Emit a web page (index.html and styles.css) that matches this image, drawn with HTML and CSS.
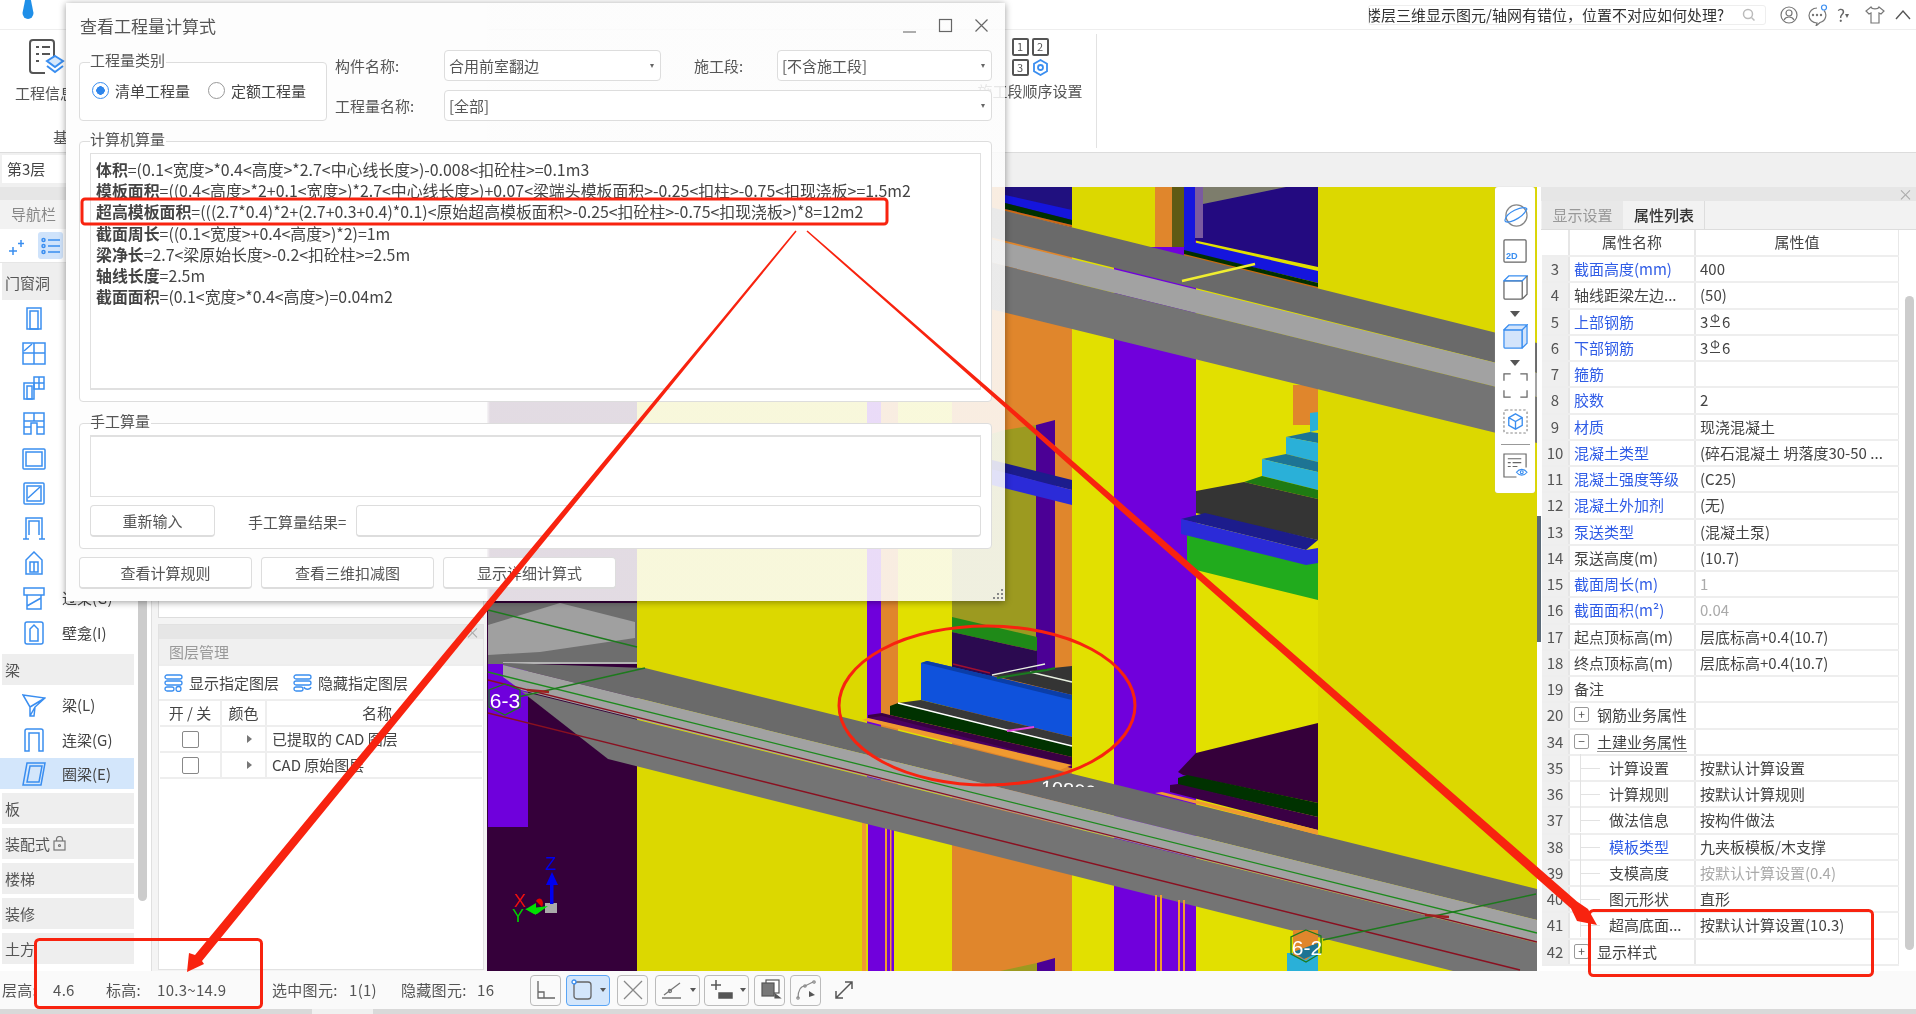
FILE: index.html
```html
<!DOCTYPE html>
<html lang="zh-CN">
<head>
<meta charset="utf-8">
<title>查看工程量计算式</title>
<link rel="stylesheet" href="styles.css">
</head>
<body>
<div class="app">
  <header class="ribbon">
    <div class="titlerow">
      <svg class="drop" width="14" height="20" viewBox="0 0 14 20"><path d="M4.500 -2h5l3 15a5.500 6 0 0 1-11 0z" fill="#1f8fe8"/></svg>
      <div class="search"><div class="search-text"><span>楼层三维显示图元/轴网有错位，位置不对应如何处理?</span></div>
        <svg width="14" height="14" viewBox="0 0 14 14" fill="none" stroke="#bbb" stroke-width="1.5"><circle cx="6" cy="6" r="4.5"/><path d="M9.5 9.5l3 3"/></svg>
      </div>
      <div class="winicons">
        <svg width="20" height="20" viewBox="0 0 20 20" fill="none" stroke="#777" stroke-width="1.2"><circle cx="10" cy="10" r="8"/><circle cx="10" cy="8" r="3"/><path d="M5 15c2-4 8-4 10 0"/></svg>
        <svg width="22" height="22" viewBox="0 0 22 22" fill="none" stroke="#777" stroke-width="1.2"><path d="M10 4a8 7.5 0 1 0 0 15l-1 3 4-3.500a8 7.500 0 0 0 4-12"/><circle cx="6" cy="11" r=".6"/><circle cx="10" cy="11" r=".6"/><circle cx="14" cy="11" r=".6"/><circle cx="17" cy="3.500" r="2.500" stroke="#3a8ef0"/></svg>
        <span class="help">?<i>▾</i></span>
        <svg width="22" height="20" viewBox="0 0 22 20" fill="none" stroke="#777" stroke-width="1.2"><path d="M7 2L2 6l3 3 2-1v10h8V8l2 1 3-3-5-4c-1 2.500-7 2.500-8 0z"/></svg>
        <svg width="18" height="14" viewBox="0 0 18 14" fill="none" stroke="#555" stroke-width="1.4"><path d="M2 11l7-8 7 8"/></svg>
      </div>
    </div>
    <div class="tools">
      <div class="tool tool-info">
        <svg width="38" height="40" viewBox="0 0 38 40" fill="none" stroke="#555" stroke-width="2"><path d="M27 26V7a3 3 0 0 0-3-3H6a3 3 0 0 0-3 3v27a3 3 0 0 0 3 3h12"/><path d="M9 11h3M15 11h8M9 18h3M15 18h8M9 25h3" stroke-width="1.800"/><path d="M28 20l8 5-8 6-8-6z" fill="#d7e8fb" stroke="#3a8ef0"/><path d="M20 30l8 6 8-6" stroke="#3a8ef0"/></svg>
        <span>工程信息</span>
      </div>
      <div class="group-label">基</div>
      <div class="tool tool-order">
        <div class="order-grid"><b>1</b><b>2</b><b>3</b>
          <svg width="17" height="17" viewBox="0 0 17 17" fill="none" stroke="#3a8ef0" stroke-width="1.800"><path d="M8.500 1l6.500 3.700v7.600L8.500 16 2 12.300V4.700z"/><circle cx="8.500" cy="8.500" r="2.500"/></svg>
        </div>
        <span>施工段顺序设置</span>
      </div>
      <div class="tool-sep"></div>
    </div>
  </header>

  <div class="floorbar"><div class="floor">第3层</div></div>

  <main class="main">
    <aside class="sidebar">
      <div class="side-top"></div>
      <div class="side-nav">导航栏</div>
      <div class="side-icons">
        <svg width="18" height="20" viewBox="0 0 18 20" fill="none" stroke="#3a8ef0" stroke-width="1.500"><path d="M5 11v8M1 15h8M13 4v7M10 7.500h6"/></svg>
        <div class="list-on"><svg width="20" height="18" viewBox="0 0 20 18" fill="none" stroke="#3a8ef0" stroke-width="1.500"><circle cx="2.500" cy="3" r="1.500"/><circle cx="2.500" cy="9" r="1.500"/><circle cx="2.500" cy="15" r="1.500"/><path d="M7 3h12M7 9h12M7 15h12"/></svg></div>
      </div>
      <div class="side-head side-head-first">门窗洞</div>
      <div class="side-list">
        <div class="item"><svg class="ic" viewBox="0 0 24 24"><rect x="5" y="2" width="14" height="21"/><rect x="8" y="5" width="8" height="18"/></svg></div>
        <div class="item"><svg class="ic" viewBox="0 0 24 24"><rect x="1" y="2" width="22" height="21"/><path d="M12 2v21M1 12h22M2 10L10 3"/></svg></div>
        <div class="item"><svg class="ic" viewBox="0 0 24 24"><rect x="2" y="7" width="10" height="16"/><rect x="5" y="10" width="5" height="13"/><rect x="12" y="1" width="10" height="12"/><path d="M17 1v12M12 7h10"/></svg></div>
        <div class="item"><svg class="ic" viewBox="0 0 24 24"><path d="M2 23V2h20v21h-7V12H9v11zM2 10h20M12 2v8M2 16h7M15 16h7"/></svg></div>
        <div class="item"><svg class="ic" viewBox="0 0 24 24"><rect x="1" y="3" width="22" height="20" rx="1"/><rect x="4" y="6" width="16" height="14"/></svg></div>
        <div class="item"><svg class="ic" viewBox="0 0 24 24"><rect x="2" y="2" width="20" height="21" rx="1"/><rect x="5" y="5" width="14" height="15"/><path d="M6 17L18 6"/></svg></div>
        <div class="item"><svg class="ic" viewBox="0 0 24 24"><path d="M4 23V2h16v21M1 23h6M17 23h6M7 19V5h10v14"/></svg></div>
        <div class="item"><svg class="ic" viewBox="0 0 24 24"><path d="M12 1l8 8v14H4V9zM8 11h8v10H8zM12 11v10"/></svg></div>
        <div class="item item-over"><svg class="ic" viewBox="0 0 24 24"><path d="M2 2h20v7H2zM5 9v14h14V9M5 20l14-8"/></svg><span>过梁(G)</span></div>
        <div class="item"><svg class="ic" viewBox="0 0 24 24"><rect x="3" y="1" width="18" height="22" rx="2"/><path d="M8 20V8l4-4 4 4v12z"/></svg><span>壁龛(I)</span></div>
      </div>
      <div class="side-head">梁</div>
      <div class="item"><svg class="ic" viewBox="0 0 24 24"><path d="M1 2l22 3-10 9-1 9h-4v-9zM8 14L23 5M13 14l-5 9"/></svg><span>梁(L)</span></div>
      <div class="item"><svg class="ic" viewBox="0 0 24 24"><path d="M3 23V3a2 2 0 0 1 2-2h14a2 2 0 0 1 2 2v20h-4V5H7v18z"/></svg><span>连梁(G)</span></div>
      <div class="item item-on"><svg class="ic" viewBox="0 0 24 24"><path d="M5 1h18l-4 22H1zM8 4h12l-3 16H5z"/></svg><span>圈梁(E)</span></div>
      <div class="side-head">板</div>
      <div class="side-head">装配式 <svg width="13" height="15" viewBox="0 0 13 15" fill="none" stroke="#777" stroke-width="1.200"><rect x="1" y="5" width="11" height="9"/><path d="M3.500 5V3a3 2.500 0 0 1 6 0v2"/><circle cx="6.500" cy="9.500" r="1"/></svg></div>
      <div class="side-head">楼梯</div>
      <div class="side-head">装修</div>
      <div class="side-head">土方</div>
      <div class="side-scroll"></div>
    </aside>

    <section class="layers">
      <div class="layers-upper"></div>
      <div class="layers-panel">
        <div class="panel-bar"><span>×</span></div>
        <div class="panel-title">图层管理</div>
        <div class="layer-tools">
          <svg width="19" height="18" viewBox="0 0 19 18" fill="none" stroke="#3a8ef0" stroke-width="1.300"><rect x="1" y="1" width="17" height="4" rx="2"/><rect x="1" y="7" width="17" height="4" rx="2"/><rect x="1" y="13" width="9" height="4" rx="2"/><circle cx="14.500" cy="15" r="2.500" fill="#fff"/></svg><span>显示指定图层</span>
          <svg class="gap" width="19" height="18" viewBox="0 0 19 18" fill="none" stroke="#3a8ef0" stroke-width="1.300"><rect x="1" y="1" width="17" height="4" rx="2"/><rect x="1" y="7" width="17" height="4" rx="2"/><rect x="1" y="13" width="9" height="4" rx="2"/><path d="M11 13c1 3 6 3 7 0"/></svg><span>隐藏指定图层</span>
        </div>
        <div class="lrow lhead"><div class="lc1">开 / 关</div><div class="lc2">颜色</div><div class="lc3 center">名称</div></div>
        <div class="lrow"><div class="lc1"><i class="check"></i></div><div class="lc2"><i class="tri"></i></div><div class="lc3">已提取的 CAD 图层</div></div>
        <div class="lrow"><div class="lc1"><i class="check"></i></div><div class="lc2"><i class="tri"></i></div><div class="lc3">CAD 原始图层</div></div>
      </div>
    </section>

    <section class="canvas">
      <svg class="scene" viewBox="487 187 1050 784" width="1050" height="784">
        <rect x="487" y="187" width="1050" height="784" fill="#dcd800"/>
        <rect x="487" y="187" width="150" height="784" fill="#35003a"/>
        <rect x="488" y="655" width="40" height="172" fill="#6f00dc"/><path d="M488 827l40-8v-10h-40z" fill="#6f00dc"/>
        <rect x="867" y="187" width="14" height="784" fill="#6f00dc"/>
        <rect x="881" y="187" width="17" height="784" fill="#e0862c"/>
        <rect x="898" y="187" width="54" height="784" fill="#e2e000"/>
        <rect x="952" y="187" width="120" height="784" fill="#e0862c"/>
        <path d="M952 445l53-15 31-5V640h-84z" fill="#9c9a20"/>
        <path d="M1036 425l19-5V670h-19z" fill="#4b0095"/>
        <path d="M952 450l120 30v10l-120-30z" fill="#1c1c8c"/><path d="M952 459l120 31v15l-120-30z" fill="#2b2bd8"/>
        <path d="M952 617l85 20v14l-85-19z" fill="#1f8a18"/>
        <path d="M952 632l85 19v19l-47 7-38-9z" fill="#2b0a50"/>
        <rect x="1072" y="187" width="42" height="784" fill="#e2e000"/>
        <rect x="1114" y="187" width="82" height="784" fill="#7000dc"/>
        <rect x="1196" y="187" width="122" height="784" fill="#e2e000"/>
        <rect x="1293" y="385" width="25" height="40" fill="#e0862c"/>
        <rect x="1318" y="187" width="219" height="784" fill="#dcd800"/>
        <!-- below-beam stripes on the left column group -->
        <rect x="862" y="800" width="36" height="171" fill="#dcd800"/>
        <rect x="862" y="800" width="4" height="171" fill="#f09a30"/>
        <rect x="868" y="800" width="26" height="171" fill="#7000dc"/>
        <rect x="885" y="800" width="2" height="171" fill="#f09a30"/><rect x="890" y="800" width="1.500" height="171" fill="#f09a30"/>
        <rect x="894" y="800" width="4" height="171" fill="#e2e000"/>
        <!-- upper openings -->
        <path d="M1005 187h67v40l-67-17z" fill="#20107f"/><path d="M1005 195l67 15v10l-67-17z" fill="#1515dd"/><path d="M1005 203l67 17v5l-67-16z" fill="#003000"/><path d="M1005 209l67 16v2l-67-16z" fill="#d06a10"/>
        <rect x="1072" y="187" width="83" height="60" fill="#dcd800"/>
        <rect x="1155" y="187" width="17" height="60" fill="#e0862c"/>
        <rect x="1172" y="187" width="12" height="60" fill="#5e5a14"/>
        <path d="M1184 187h134v80l-134-29z" fill="#230a80"/>
        <path d="M1184 187h11v60h-11z" fill="#1515dd"/>
        <path d="M1195 187h8v51h-8z" fill="#7a5aa0"/>
        <path d="M1203 187h83l-83 17z" fill="#7d7d6c"/>
        <path d="M1184 240l134 31v12l-134-32z" fill="#1515dd"/><path d="M1184 250l134 33v5l-134-33z" fill="#003000"/><path d="M1184 254l134 33v2l-134-33z" fill="#c86a10"/>
        <!-- upper beam -->
        <path d="M640 120L1537 343V373L640 150z" fill="#6a6a6a"/>
        <path d="M640 153L1537 373V397L640 176z" fill="#a2a2a2"/>
        <path d="M640 176L1537 397V443L640 223z" fill="#747474"/>
        <path d="M1182 281L1255 264" stroke="#f0ee30" stroke-width="2.500" fill="none"/>
        <!-- stairs -->
        <path d="M1310 413l8-1v18l-8 2z" fill="#2ab0d8"/>
        <path d="M1286 437l24-5 8 1v10z" fill="#1d7494"/><path d="M1286 437l32 6v19l-32-8z" fill="#2ab0d8"/>
        <path d="M1262 459l24-5 32 8v10z" fill="#1d7494"/><path d="M1262 459l56 13v18l-56-14z" fill="#2ab0d8"/>
        <path d="M1244 482l18-6 56 14v9z" fill="#1f7a12"/>
        <path d="M1196 491l48-9 74 17v41l-122-27z" fill="#343434"/>
        <path d="M1181 519l24-6 113 27-12 10z" fill="#1c1c8c"/>
        <path d="M1187 534l119 30 12-2v38l-122-30h-9z" fill="#21ab1d"/>
        <path d="M1181 519l125 31 12-2v15l-12 2-125-31z" fill="#2b2bd8"/>
        <!-- centre recess -->
        <path d="M990 675l63-7 19-2v29z" fill="#343434"/>
        <path d="M953 664l37 9" stroke="#a01030" stroke-width="1.500"/>
        <path d="M921 663l6-2 145 34v42l-151-37z" fill="#0f52dc"/><path d="M921 663l6-2 145 34v5z" fill="#0b3ea8"/>
        <path d="M898 703l23-3 151 37v9z" fill="#383838"/>
        <path d="M890 706l8-3 174 43v11l-182-42z" fill="#003200"/>
        <path d="M868 715l14-2 8 2 182 42v11L868 718z" fill="#3a0044"/>
        <path d="M868 718l204 50v-3L882 716z" fill="#4a0060"/>
        <path d="M898 703l174 43" stroke="#fff" stroke-width="1.500"/>
        <path d="M992 675l53-11M1030 672l42 10" stroke="#e8f0e0" stroke-width="1.300"/><path d="M997 678l50-8 8-2" stroke="#1a7a20" stroke-width="2"/>
        <path d="M1007 731l27-4" stroke="#e040e0" stroke-width="2"/>
        <path d="M1196 753l122-30v80l-135-28-5-3z" fill="#35003a"/>
        <path d="M1178 778l9-3 131 28v14l-140-32z" fill="#003200"/>
        <path d="M1170 785l8-1 140 33v13l-148-38z" fill="#3a0044"/>
        <!-- lower beam and left block -->
        <rect x="488" y="603" width="149" height="61" fill="#6e6e6e"/>
        <path d="M560 603l75 19v16l-95 14-52 3v-30z" fill="#a0a0a0"/>
        <path d="M488 610l149 37" stroke="#1d7a1d" stroke-width="1.500"/>
        <path d="M503 663h134" stroke="#ccc" stroke-width="1.500"/>
        <path d="M503 663l142 5 892 221v31L503 665z" fill="#6a6a6a"/>
        <path d="M503 665l1034 255v23L521 690l-18-13z" fill="#a2a2a2"/>
        <path d="M521 691l1016 252v28h-84L608 759z" fill="#747474"/>
        <path d="M862 720l6-2 204 47-12 5z" fill="#f09a30"/><path d="M1155 793l7-1 156 38v5z" fill="#f09a30"/>
        <path d="M488 672l1049 261" stroke="#1d8a1d" stroke-width="1.300"/>
        <path d="M488 680l1049 262M488 713l1032 257" stroke="#8a1020" stroke-width="1.300"/>
        <path d="M518 697l127-29M1323 940l213-46" stroke="#1d7a1d" stroke-width="1.300"/>
        <path d="M527 690l22 2M1425 915l24 2" stroke="#a02020" stroke-width="2.500"/>
        <rect x="1155" y="895" width="2" height="76" fill="#f09a30"/><rect x="1160" y="895" width="2" height="76" fill="#f09a30"/><rect x="1178" y="900" width="2" height="71" fill="#f09a30"/><rect x="1183" y="900" width="2" height="71" fill="#f09a30"/>
        <path d="M1000 971l37-8h18v8z" fill="#9c9a20"/><path d="M1037 963l18-5v13h-18z" fill="#4b0095"/>
        <rect x="1287" y="953" width="31" height="18" fill="#2ab0d8"/>
        <path d="M1293 930h25v20l-12 10-13-5z" fill="#e0862c"/><path d="M1293 952l25-9v10l-14 6z" fill="#1d7494"/>
        <path d="M1306 930l15 6v17l-15 9-15-8v-17z" fill="none" stroke="#1d7a1d" stroke-width="1.300"/>
        <path d="M505 684l15 6v17l-15 8-16-8v-17z" fill="none" stroke="#1d7a1d" stroke-width="1.300"/>
        <text class="s-label" x="1307" y="955" text-anchor="middle">6-2</text>
        <text class="s-label" x="505" y="708" text-anchor="middle">6-3</text>
        <clipPath id="dimclip"><rect x="1030" y="770" width="80" height="17"/></clipPath>
        <g clip-path="url(#dimclip)"><text class="s-dim" x="1040" y="794" transform="rotate(6 1040 794)">10800</text></g>
        <!-- axis -->
        <rect x="545" y="903" width="12" height="10" fill="#aaa"/>
        <rect x="550" y="880" width="3.500" height="24" fill="#0000f0"/><path d="M552 872l6 13h-12z" fill="#0000f0"/>
        <path d="M548 906l-23 3 9 5 3 0z" fill="#00e000"/><path d="M526 909l10-6v12z" fill="#00e000"/>
        <path d="M536 901c4-6 9 0 6 6z" fill="#e00000"/>
        <text class="s-axis az" x="545" y="870">Z</text><text class="s-axis ax" x="514" y="907">X</text><text class="s-axis ay" x="512" y="922">Y</text>
      </svg>
      <div class="viewbar">
        <svg class="v" viewBox="0 0 26 26" fill="none" stroke="#888" stroke-width="1.300"><circle cx="14" cy="13" r="11"/><path d="M2 18C3 10 20 2 25 6" stroke="#3a8ef0"/><path d="M2 18c0 5 18-1 23-12" stroke="#3a8ef0"/></svg>
        <svg class="v" viewBox="0 0 26 26" fill="none" stroke="#666" stroke-width="1.300"><rect x="1" y="1" width="23" height="23" rx="1"/><text class="v2dt" x="3" y="21">2D</text></svg>
        <svg class="v" viewBox="0 0 26 26" fill="none" stroke="#666" stroke-width="1.300"><rect x="1" y="6" width="19" height="19" rx="1"/><path d="M1 6l5-5h19l-5 5z" stroke="#3a8ef0"/><path d="M25 1v19l-5 5"/></svg>
        <i class="vtri"></i>
        <svg class="v" viewBox="0 0 26 26" fill="#d3e4fb" stroke="#3a8ef0" stroke-width="1.300"><rect x="1" y="6" width="19" height="19" rx="1"/><path d="M1 6l5-5h19l-5 5zM25 1v19l-5 5V6z"/></svg>
        <i class="vtri"></i>
        <svg class="v" viewBox="0 0 26 26" fill="none" stroke="#666" stroke-width="1.300"><path d="M1 8V1h7M18 1h7v7M25 18v7h-7M8 25H1v-7"/></svg>
        <svg class="v" viewBox="0 0 26 26" fill="none" stroke="#888" stroke-width="1.200"><rect x="1" y="1" width="24" height="24" rx="2" stroke-dasharray="2.500 2"/><path d="M13 5l7 4v8l-7 4-7-4V9zM6 9l7 4 7-4M13 13v8" stroke="#3a8ef0" stroke-width="1.400"/></svg>
        <i class="vline"></i>
        <svg class="v" viewBox="0 0 26 26" fill="none" stroke="#666" stroke-width="1.200"><path d="M14 25H1V1h23v14"/><path d="M5 6h14M5 10h3M10 10h9M5 14h3M10 14h5"/><path d="M14 20c3-4 8-4 11 0-3 4-8 4-11 0z" stroke="#3a8ef0"/><circle cx="19.500" cy="20" r="1.500" stroke="#3a8ef0"/></svg>
      </div>
    </section>

    <div class="splitter"><i></i></div>

    <section class="props">
      <div class="panel-bar"><span>×</span></div>
      <div class="tabs"><div class="tab">显示设置</div><div class="tab tab-on">属性列表</div></div>
      <div class="ptable">
        <div class="prow phead"><div class="pn"></div><div class="pk pc">属性名称</div><div class="pv pc">属性值</div></div>
        <div class="prow"><div class="pn">3</div><div class="pk link">截面高度(mm)</div><div class="pv">400</div></div>
        <div class="prow"><div class="pn">4</div><div class="pk">轴线距梁左边...</div><div class="pv">(50)</div></div>
        <div class="prow"><div class="pn">5</div><div class="pk link">上部钢筋</div><div class="pv">3<sup class="bar">Φ</sup>6</div></div>
        <div class="prow"><div class="pn">6</div><div class="pk link">下部钢筋</div><div class="pv">3<sup class="bar">Φ</sup>6</div></div>
        <div class="prow"><div class="pn">7</div><div class="pk link">箍筋</div><div class="pv"></div></div>
        <div class="prow"><div class="pn">8</div><div class="pk link">胶数</div><div class="pv">2</div></div>
        <div class="prow"><div class="pn">9</div><div class="pk link">材质</div><div class="pv">现浇混凝土</div></div>
        <div class="prow"><div class="pn">10</div><div class="pk link">混凝土类型</div><div class="pv">(碎石混凝土 坍落度30-50 ...</div></div>
        <div class="prow"><div class="pn">11</div><div class="pk link">混凝土强度等级</div><div class="pv">(C25)</div></div>
        <div class="prow"><div class="pn">12</div><div class="pk link">混凝土外加剂</div><div class="pv">(无)</div></div>
        <div class="prow"><div class="pn">13</div><div class="pk link">泵送类型</div><div class="pv">(混凝土泵)</div></div>
        <div class="prow"><div class="pn">14</div><div class="pk">泵送高度(m)</div><div class="pv">(10.7)</div></div>
        <div class="prow"><div class="pn">15</div><div class="pk link">截面周长(m)</div><div class="pv dim">1</div></div>
        <div class="prow"><div class="pn">16</div><div class="pk link">截面面积(m²)</div><div class="pv dim">0.04</div></div>
        <div class="prow"><div class="pn">17</div><div class="pk">起点顶标高(m)</div><div class="pv">层底标高+0.4(10.7)</div></div>
        <div class="prow"><div class="pn">18</div><div class="pk">终点顶标高(m)</div><div class="pv">层底标高+0.4(10.7)</div></div>
        <div class="prow"><div class="pn">19</div><div class="pk">备注</div><div class="pv"></div></div>
        <div class="prow"><div class="pn">20</div><div class="pk"><i class="box">+</i>钢筋业务属性</div><div class="pv"></div></div>
        <div class="prow"><div class="pn">34</div><div class="pk"><i class="box">−</i><u>土建业务属性</u></div><div class="pv"></div></div>
        <div class="prow"><div class="pn">35</div><div class="pk"><i class="tree"></i>计算设置</div><div class="pv">按默认计算设置</div></div>
        <div class="prow"><div class="pn">36</div><div class="pk"><i class="tree"></i>计算规则</div><div class="pv">按默认计算规则</div></div>
        <div class="prow"><div class="pn">37</div><div class="pk"><i class="tree"></i>做法信息</div><div class="pv">按构件做法</div></div>
        <div class="prow"><div class="pn">38</div><div class="pk link"><i class="tree"></i>模板类型</div><div class="pv">九夹板模板/木支撑</div></div>
        <div class="prow"><div class="pn">39</div><div class="pk"><i class="tree"></i>支模高度</div><div class="pv dim">按默认计算设置(0.4)</div></div>
        <div class="prow"><div class="pn">40</div><div class="pk"><i class="tree"></i>图元形状</div><div class="pv">直形</div></div>
        <div class="prow"><div class="pn">41</div><div class="pk"><i class="tree"></i>超高底面...</div><div class="pv">按默认计算设置(10.3)</div></div>
        <div class="prow"><div class="pn">42</div><div class="pk"><i class="box">+</i>显示样式</div><div class="pv"></div></div>
      </div>
      <div class="props-scroll"></div>
    </section>
  </main>

  <footer class="status">
    <div class="status-info">
      <span>层高:</span><span>4.6</span><span>标高:</span><span>10.3~14.9</span><span>选中图元:</span><span>1(1)</span><span>隐藏图元:</span><span>16</span>
    </div>
    <div class="sbtn"><svg width="24" height="24" viewBox="0 0 24 24" fill="none" stroke="#666" stroke-width="1.300"><path d="M4 3v17h17M4 14h6v6"/></svg></div>
    <div class="sbtn sbtn-wide sbtn-on"><svg width="24" height="24" viewBox="0 0 24 24" fill="none" stroke="#666" stroke-width="1.300"><rect x="4" y="4" width="17" height="17" rx="3"/><circle cx="4" cy="4" r="2" stroke="#3a8ef0" fill="#fff"/></svg><i class="stri"></i></div>
    <div class="sbtn"><svg width="24" height="24" viewBox="0 0 24 24" fill="none" stroke="#888" stroke-width="1.300"><path d="M3 3l18 18M21 3L3 21"/></svg></div>
    <div class="sbtn sbtn-wide sbtn-b"><svg width="24" height="24" viewBox="0 0 24 24" fill="none" stroke="#777" stroke-width="1.300"><path d="M2 20h19M4 17L20 5"/><circle cx="10" cy="13" r="1.500"/></svg><i class="stri"></i></div>
    <div class="sbtn sbtn-wide sbtn-c"><svg width="26" height="24" viewBox="0 0 26 24" fill="none" stroke="#555" stroke-width="1.500"><path d="M8 2v10M3 7h10"/><rect x="11" y="15" width="13" height="5" fill="#555"/></svg><i class="stri"></i></div>
    <div class="sbtn sbtn-d"><svg width="24" height="24" viewBox="0 0 24 24" fill="#777" stroke="#555" stroke-width="1.200"><rect x="8" y="2" width="13" height="13" fill="#fff"/><rect x="4" y="5" width="12" height="13"/><path d="M17 16l5 4h-5z" fill="#555"/></svg></div>
    <div class="sbtn"><svg width="24" height="24" viewBox="0 0 24 24" fill="none" stroke="#888" stroke-width="1.200"><path d="M4 20c0-8 3-12 7-12l8-4"/><circle cx="4" cy="20" r="1.200"/><circle cx="11" cy="8" r="1.200"/><circle cx="20" cy="4" r="1.200"/><path d="M15 13l6 4-6 2z" fill="#555" stroke="none"/></svg></div>
    <div class="sexpand"><svg width="22" height="22" viewBox="0 0 22 22" fill="none" stroke="#555" stroke-width="1.500"><path d="M3 19L19 3M12 3h7v7M3 12v7h7"/></svg></div>
  </footer>
  <div class="bottomstrip"><i></i></div>

  <!-- floating dialog window -->
  <section class="dialog">
    <div class="d-title">
      <span>查看工程量计算式</span>
      <div class="d-win">
        <svg width="15" height="15" viewBox="0 0 15 15" fill="none" stroke="#777" stroke-width="1.200"><path d="M1 14h13"/></svg>
        <svg width="15" height="15" viewBox="0 0 15 15" fill="none" stroke="#666" stroke-width="1.200"><rect x="1.500" y="1.500" width="12" height="12"/></svg>
        <svg width="15" height="15" viewBox="0 0 15 15" fill="none" stroke="#666" stroke-width="1.200"><path d="M1.500 1.500l12 12M13.500 1.500l-12 12"/></svg>
      </div>
    </div>
    <div class="d-top">
      <div class="group g-type">
        <span class="legend">工程量类别</span>
        <div class="radios">
          <i class="radio radio-on"></i><span>清单工程量</span>
          <i class="radio radio-2"></i><span>定额工程量</span>
        </div>
      </div>
      <div class="form">
        <span>构件名称:</span><div class="select">合用前室翻边<i class="caret"></i></div>
        <span class="form-mid">施工段:</span><div class="select">[不含施工段]<i class="caret"></i></div>
        <span>工程量名称:</span><div class="select select-full">[全部]<i class="caret"></i></div>
      </div>
    </div>
    <div class="group g-calc">
      <span class="legend">计算机算量</span>
      <div class="calcbox">
        <div><b>体积</b>=(0.1&lt;宽度&gt;*0.4&lt;高度&gt;*2.7&lt;中心线长度&gt;)-0.008&lt;扣砼柱&gt;=0.1m3</div>
        <div><b>模板面积</b>=((0.4&lt;高度&gt;*2+0.1&lt;宽度&gt;)*2.7&lt;中心线长度&gt;)+0.07&lt;梁端头模板面积&gt;-0.25&lt;扣柱&gt;-0.75&lt;扣现浇板&gt;=1.5m2</div>
        <div><b>超高模板面积</b>=(((2.7*0.4)*2+(2.7+0.3+0.4)*0.1)&lt;原始超高模板面积&gt;-0.25&lt;扣砼柱&gt;-0.75&lt;扣现浇板&gt;)*8=12m2</div>
        <div><b>截面周长</b>=((0.1&lt;宽度&gt;+0.4&lt;高度&gt;)*2)=1m</div>
        <div><b>梁净长</b>=2.7&lt;梁原始长度&gt;-0.2&lt;扣砼柱&gt;=2.5m</div>
        <div><b>轴线长度</b>=2.5m</div>
        <div><b>截面面积</b>=(0.1&lt;宽度&gt;*0.4&lt;高度&gt;)=0.04m2</div>
      </div>
    </div>
    <div class="group g-manual">
      <span class="legend">手工算量</span>
      <div class="manualbox"></div>
      <div class="manual-row">
        <div class="btn btn-re">重新输入</div>
        <span class="m-label">手工算量结果=</span>
        <div class="m-input"></div>
      </div>
    </div>
    <div class="d-btns">
      <div class="btn btn-b">查看计算规则</div>
      <div class="btn btn-b">查看三维扣减图</div>
      <div class="btn btn-b">显示详细计算式</div>
    </div>
    <svg class="grip" width="10" height="10" viewBox="0 0 10 10" fill="#888"><rect x="8" y="0" width="2" height="2"/><rect x="4" y="4" width="2" height="2"/><rect x="8" y="4" width="2" height="2"/><rect x="0" y="8" width="2" height="2"/><rect x="4" y="8" width="2" height="2"/><rect x="8" y="8" width="2" height="2"/></svg>
  </section>

  <!-- hand-drawn red annotations lying over the screenshot -->
  <svg class="annot" viewBox="0 0 1916 1014" width="1916" height="1014">
    <rect x="82" y="199" width="805" height="25" rx="3"/>
    <rect x="35.500" y="939.500" width="226" height="68" rx="4"/>
    <rect x="1589.500" y="910.500" width="283" height="65" rx="4"/>
    <ellipse cx="987" cy="705.500" rx="148" ry="79.500"/>
    <path class="fill" d="M795.400 230.500L796.600 231.500L724 320.800L445.700 662.200L202 960.900L204 964L187 972L189 953L195 955.100L440.300 657.800L722 319.200Z"/>
    <path class="fill" d="M807.500 230.400L943.500 348.900L1115 497.750L1577 901.600L1588 909L1597 925L1577 921L1571 908.400L1111 502.250L941.500 351.100L806.500 231.600Z"/>
  </svg>
</div>
</body>
</html>
```
FILE: styles.css
```css
* { box-sizing: border-box; }
html, body { margin: 0; padding: 0; }
body { background: #fff; font-family: "Noto Sans CJK SC", "Liberation Sans", sans-serif; font-size: 15px; color: #444; }
.app { position: relative; width: 1916px; height: 1014px; overflow: hidden; display: flex; flex-direction: column; background: #fff; filter: blur(.45px); }
i { display: block; font-style: normal; }

/* ribbon */
.ribbon { height: 153px; flex: none; background: #fff; border-bottom: 1px solid #dcdcdc; }
.titlerow { height: 30px; border-bottom: 1px solid #eee; display: flex; align-items: center; padding-left: 21px; }
.drop { align-self: flex-start; flex: none; }
.search { flex: none; margin-left: 1333px; width: 398px; height: 20px; display: flex; align-items: center; border: 1px solid #eee; border-radius: 3px; padding-right: 10px; overflow: hidden; }
.search-text { width: 355px; flex: none; display: flex; justify-content: flex-end; overflow: hidden; line-height: 18px; color: #333; }
.search-text span { flex: none; white-space: nowrap; }
.search svg { margin-left: 18px; flex: none; }
.winicons { display: flex; align-items: center; flex: none; margin-left: 13px; gap: 8px; }
.help { font-size: 17px; color: #666; width: 19px; display: flex; align-items: center; }
.help i { font-size: 8px; }
.tools { height: 122px; display: flex; align-items: flex-start; }
.tool { display: flex; flex-direction: column; align-items: center; color: #555; flex: none; }
.tool-info { width: 51px; margin-left: 15px; padding-top: 6px; line-height: 20px; white-space: nowrap; gap: 7px; overflow: hidden; align-items: flex-start; }
.tool-info svg { margin-left: 12px; flex: none; }
.group-label { margin: 97px 0 0 -13px; line-height: 20px; width: 13px; white-space: nowrap; color: #555; flex: none; font-size: 15px; }
.tool-order { margin-left: 911px; width: 106px; padding-top: 8px; white-space: nowrap; line-height: 20px; gap: 5px; }
.order-grid { display: grid; grid-template-columns: 17px 17px; gap: 3px; color: #555; width: 37px; height: 38px; }
.order-grid b { border: 2px solid #555; border-radius: 2px; font-size: 11px; font-weight: 400; line-height: 13px; text-align: center; }
.tool-sep { width: 1px; height: 114px; background: #e2e2e2; margin: 4px 0 0 13px; flex: none; }

.floorbar { height: 34px; flex: none; background: #f0f0f0; padding: 2px; }
.floor { width: 64px; height: 28px; background: #fff; line-height: 27px; padding-left: 5px; color: #444; }

.main { height: 784px; flex: none; display: flex; background: #f4f4f4; }

/* left navigation */
.sidebar { width: 152px; flex: none; background: #fff; position: relative; border-right: 1px solid #e0e0e0; }
.side-top { height: 13px; background: #e6e6e6; }
.side-nav { height: 29px; background: #f2f2f2; line-height: 28px; padding-left: 11px; color: #888; }
.side-icons { height: 34px; display: flex; align-items: center; padding-left: 8px; gap: 12px; border-bottom: 1px solid #e6e6e6; }
.list-on { width: 25px; height: 27px; background: #cfe3fb; border-radius: 3px; display: flex; align-items: center; justify-content: center; }
.side-head { width: 132px; height: 31px; margin: 4px 0 0 2px; background: #eee; line-height: 30px; padding-left: 3px; color: #555; display: flex; align-items: center; gap: 3px; }
.side-head-first { margin-top: 0; height: 37px; padding-top: 2px; }
.side-list { display: flex; flex-direction: column; }
.item { width: 134px; height: 35px; display: flex; align-items: center; padding-left: 22px; gap: 16px; color: #444; white-space: nowrap; flex: none; }
.side-head + .item { margin-top: 2px; }
.item-on { background: #d3e6fb; height: 31px; margin-top: 1px; }
.ic { width: 24px; height: 24px; fill: none; stroke: #3a8ef0; stroke-width: 1.500; flex: none; }
.side-scroll { position: absolute; left: 138px; top: 262px; bottom: 70px; width: 9px; border-radius: 5px; background: #ccc; }

/* layer manager */
.layers { width: 326px; flex: none; margin: 0 3px 0 6px; display: flex; flex-direction: column; gap: 6px; }
.layers-upper { height: 431px; border: 1px solid #ddd; background: #fff; }
.layers-panel { flex: 1; background: #fff; border: 1px solid #e2e2e2; margin-bottom: 1px; }
.panel-bar { height: 14px; background: #e6e6e6; display: flex; justify-content: flex-end; align-items: center; padding-right: 3px; color: #aaa; font-size: 15px; line-height: 14px; }
.panel-title { height: 27px; background: #f0f0f0; line-height: 26px; padding-left: 10px; color: #999; border-bottom: 2px solid #eee; }
.layer-tools { height: 35px; display: flex; align-items: center; padding-left: 5px; gap: 6px; color: #444; border-bottom: 2px solid #eee; }
.layer-tools .gap { margin-left: 8px; }
.lrow { height: 26px; display: flex; border-bottom: 2px solid #eee; margin: 0 1px; line-height: 20px; }
.lhead { height: 26px; }
.lrow > div { display: flex; align-items: center; justify-content: center; border-right: 2px solid #eee; flex: none; }
.lc1 { width: 62px; }
.lc2 { width: 45px; }
.lrow .lc3 { flex: 1; justify-content: flex-start; padding-left: 5px; border-right: 0; }
.lrow .lc3.center { justify-content: center; }
.check { width: 17px; height: 17px; border: 1px solid #888; border-radius: 2px; background: #fff; }
.tri { width: 0; height: 0; border-left: 5px solid #777; border-top: 4px solid transparent; border-bottom: 4px solid transparent; margin-left: 12px; }

/* 3D canvas */
.canvas { width: 1050px; flex: none; position: relative; }
.scene { display: block; }
.s-label { font-family: "Liberation Sans", sans-serif; font-size: 21px; fill: #fff; }
.s-dim { font-family: "Liberation Sans", sans-serif; font-size: 20px; fill: #fff; }
.s-axis { font-family: "Liberation Sans", sans-serif; font-size: 18px; }
.az { fill: #0000f0; } .ax { fill: #f01010; } .ay { fill: #00d000; }
.viewbar { position: absolute; left: 1008px; top: 0; width: 40px; height: 306px; background: #fff; border-radius: 3px; box-shadow: 0 0 1px #bbb; display: flex; flex-direction: column; align-items: center; padding-top: 16px; }
.v { width: 25px; height: 25px; flex: none; margin-bottom: 11px; }
.v2dt { font-family: "Liberation Sans", sans-serif; font-size: 9.500px; font-weight: 700; fill: #3a8ef0; stroke: none; }
.vtri { width: 0; height: 0; border-left: 5px solid transparent; border-right: 5px solid transparent; border-top: 6px solid #555; margin: 0 0 7px; flex: none; }
.vline { width: 29px; height: 1px; background: #999; margin: -1px 0 8px; flex: none; }
.splitter { width: 4px; flex: none; background: #fff; }
.splitter i { width: 4px; height: 126px; background: #5a6a78; margin-top: 329px; }

/* property panel */
.props { width: 375px; flex: none; position: relative; background: #fff; }
.tabs { height: 29px; background: #f2f2f2; display: flex; border-bottom: 1px solid #ddd; }
.tab { width: 81px; margin-left: 1px; height: 28px; line-height: 27px; text-align: center; color: #999; background: #e8e8e8; font-size: 15px; }
.tab-on { color: #333; background: #f2f2f2; font-weight: 500; border-right: 1px solid #ddd; }
.ptable { width: 357px; margin-left: 1px; }
.prow { height: 26.250px; display: flex; border-bottom: 2px solid #eee; line-height: 24px; }
.phead { height: 27.200px; }
.pn { width: 28px; flex: none; background: #efefef; text-align: center; border-right: 2px solid #e6e6e6; color: #555; }
.phead .pn { background: #fff; }
.pk { width: 126px; flex: none; padding-left: 4px; border-right: 2px solid #e8e8e8; white-space: nowrap; color: #444; position: relative; }
.pv { flex: 1; padding-left: 4px; border-right: 1px solid #e8e8e8; white-space: nowrap; color: #444; }
.pc { text-align: center; padding-left: 0; }
.link { color: #2f5ce6; }
.dim { color: #aaa; }
.bar { font-size: 12px; line-height: 0; vertical-align: 5px; margin: 0 2px; border-bottom: 1px solid #444; }
.box { display: inline-block; width: 15px; height: 15px; margin: 0 8px 0 0; border: 1px solid #999; border-radius: 2px; font-size: 12px; line-height: 12px; text-align: center; color: #555; vertical-align: 2px; }
.pk u { text-underline-offset: 3px; text-decoration-color: #999; }
.tree { display: inline-block; width: 35px; height: 26px; vertical-align: top; }
.tree::before { content: ""; position: absolute; left: 10px; top: -2px; height: 26px; width: 1px; background: #e2e2e2; }
.tree::after { content: ""; position: absolute; left: 10px; top: 12px; width: 20px; height: 1px; background: #e2e2e2; }
.props-scroll { position: absolute; right: 2px; top: 109px; width: 9px; height: 654px; border-radius: 5px; background: #ccc; }

/* status bar */
.status { height: 38px; flex: none; background: #fafafa; display: flex; align-items: center; padding-left: 2px; }
.status-info { width: 528px; flex: none; display: grid; grid-template-columns: 51px 53px 51px 115px 77px 52px 76px 53px; color: #555; line-height: 19px; white-space: nowrap; letter-spacing: .3px; padding-bottom: 2px; }
.sbtn { width: 31px; height: 31px; margin-right: 5px; flex: none; border: 1px solid #bbb; border-radius: 4px; display: flex; align-items: center; justify-content: center; gap: 6px; }
.sbtn-wide { width: 45px; }
.sbtn-on { background: #d3e6fb; border-color: #5aa5f5; margin-right: 7px; width: 44px; }
.sbtn-b { margin-left: 2px; margin-right: 4px; }
.stri { width: 0; height: 0; border-left: 3.500px solid transparent; border-right: 3.500px solid transparent; border-top: 4px solid #555; flex: none; }
.sexpand { margin-left: 7px; display: flex; }
.bottomstrip { height: 5px; flex: none; background: #d9d9d9; padding-left: 312px; }
.bottomstrip i { width: 61px; height: 5px; background: #f0f0f0; }

/* dialog */
.dialog { position: absolute; left: 66px; top: 3px; width: 939px; height: 598px; background: linear-gradient(90deg, #fdfdfd 0 420px, rgba(252,252,252,.87) 424px); box-shadow: 0 1px 7px rgba(0,0,0,.4); display: flex; flex-direction: column; padding: 0 13px; color: #444; }
.d-title { height: 47px; flex: none; display: flex; justify-content: space-between; align-items: center; padding: 0 3px 2px 1px; font-size: 17px; color: #555; }
.d-win { display: flex; gap: 21px; }
.d-top { height: 71px; flex: none; display: flex; }
.group { background: #fff; border: 1px solid #ddd; border-radius: 4px; position: relative; flex: none; }
.legend { position: absolute; left: 10px; top: -13px; background: linear-gradient(transparent 50%, #fff 50%); line-height: 20px; padding-right: 1px; color: #555; }
.g-type { width: 248px; height: 59px; margin-top: 12px; }
.radios { display: flex; align-items: center; height: 100%; padding: 0 0 3px 12px; white-space: nowrap; }
.radio { width: 17px; height: 17px; border: 1px solid #999; border-radius: 50%; margin-right: 6px; flex: none; background: #fff; }
.radio-on { border-color: #3a8ef0; background: radial-gradient(circle, #2f86ec 0 4px, #fff 4.500px); }
.radio-2 { margin-left: 18px; }
.form { margin-left: 8px; flex: 1; display: grid; grid-template-columns: 109px 217px 116px 1fr; grid-template-rows: 31px 31px; row-gap: 9px; align-items: center; white-space: nowrap; color: #555; }
.form-mid { padding-left: 33px; }
.select { height: 31px; border: 1px solid #ddd; border-radius: 4px; background: #fff; display: flex; align-items: center; justify-content: space-between; padding: 0 6px 0 4px; color: #555; }
.select-full { grid-column: 2 / 5; }
.caret { width: 0; height: 0; border-left: 2.500px solid transparent; border-right: 2.500px solid transparent; border-top: 4px solid #666; }
.g-calc { height: 261px; margin-top: 20px; padding: 11px 10px 11px; }
.calcbox { height: 237px; border: 1px solid #e0e0e0; border-bottom-width: 2px; padding: 5px 5px; color: #444; background: #fff; white-space: nowrap; font-size: 15.900px; line-height: 21.200px; }
.g-manual { height: 126px; margin-top: 21px; padding: 11px 10px; }
.manualbox { height: 62px; border: 1px solid #e0e0e0; border-top-width: 2px; background: #fff; }
.manual-row { display: flex; align-items: center; margin-top: 8px; }
.btn { height: 32px; border: 1px solid #ddd; border-bottom-width: 2px; border-radius: 4px; background: #fff; display: flex; align-items: center; justify-content: center; color: #555; flex: none; white-space: nowrap; }
.btn-re { width: 125px; }
.m-label { margin-left: 33px; width: 108px; white-space: nowrap; color: #555; }
.m-input { flex: 1; height: 32px; border: 1px solid #ddd; border-bottom-width: 2px; border-radius: 4px; background: #fff; }
.d-btns { margin-top: 8px; display: flex; gap: 9px; }
.btn-b { width: 173px; }
.grip { position: absolute; right: 2px; bottom: 2px; }

/* annotations */
.annot { position: absolute; left: 0; top: 0; pointer-events: none; fill: none; stroke: #f8230f; stroke-width: 3; }
.annot .fill { fill: #f8230f; stroke: none; }
```
